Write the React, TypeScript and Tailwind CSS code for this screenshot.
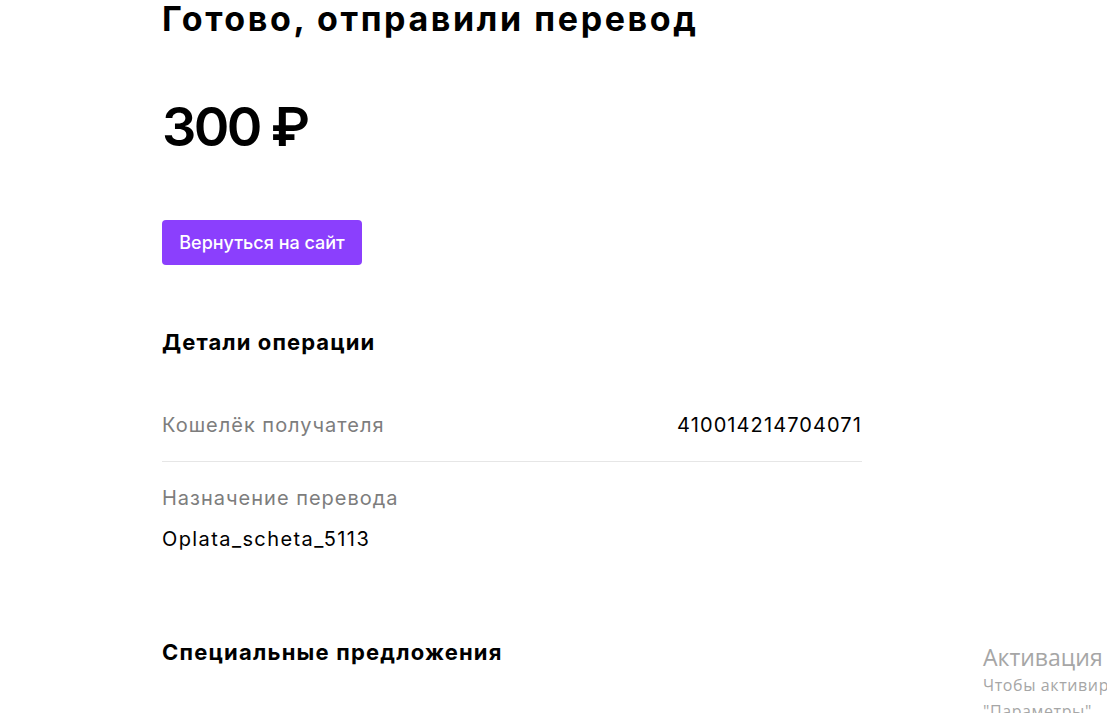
export default function App() {
    return (
        <div className="relative h-[713px] w-full overflow-hidden bg-white font-['Inter',sans-serif] text-black">
            <div className="ml-[162px] flex w-[700px] flex-col">
                <h1 className="whitespace-nowrap text-[34px] font-bold leading-[38px] tracking-[2.6px]">
                    Готово, отправили перевод
                </h1>

                <div className="mt-[57px] text-[54px] font-semibold leading-[64px] tracking-[-2.6px]">300 ₽</div>

                <div className="mt-[61px]">
                    <button className="h-[45px] w-[200px] rounded-[4px] bg-[#8b3ffd] text-[18px] font-medium text-white">
                        Вернуться на сайт
                    </button>
                </div>

                <h2 className="mt-[63px] text-[22px] font-bold leading-[28px] tracking-[1.1px]">Детали операции</h2>

                <div className="mt-[55px] flex items-center justify-between border-b border-[#e6e6e6] pb-[22px] text-[20px] leading-[28px] tracking-[1px]">
                    <span className="text-[#7d7d7d]">Кошелёк получателя</span>
                    <span className="tracking-[1.1px]">410014214704071</span>
                </div>

                <div className="flex flex-col pt-[22px] text-[20px] leading-[28px] tracking-[1px]">
                    <span className="text-[#7d7d7d]">Назначение перевода</span>
                    <span className="mt-[13px] tracking-[1.4px]">Oplata_scheta_5113</span>
                </div>

                <h2 className="mt-[85px] text-[22px] font-bold leading-[28px] tracking-[1.2px]">Специальные предложения</h2>
            </div>

            {/* windows activation watermark */}
            <div className="pointer-events-none absolute left-[983px] top-[642px] flex flex-col whitespace-nowrap font-['Open_Sans',sans-serif] text-[#a6a6a6]">
                <span className="text-[23px] leading-[30px]">Активация</span>
                <span className="text-[16px] leading-[26px] tracking-[0.6px]">Чтобы активировать Windows, перейдите в</span>
                <span className="text-[16px] leading-[26px] tracking-[0.6px]">"Параметры".</span>
            </div>
        </div>
    );
}
